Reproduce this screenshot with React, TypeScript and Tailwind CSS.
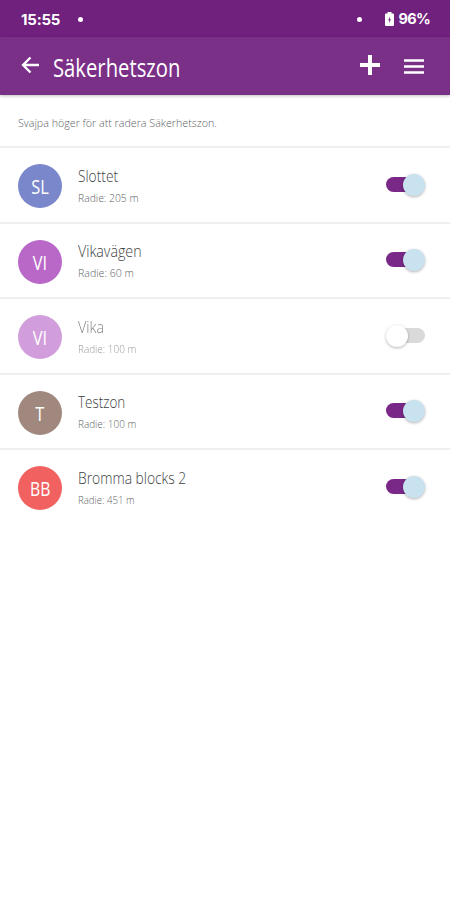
import clsx from 'clsx'

interface Zone {
  name: string
  radius: string
  initials: string
  color: string
  nameFit: string
  radiusFit: string
  initialsFit: string
  enabled: boolean
}

const zones: Zone[] = [
  { name: 'Slottet', radius: '205 m', initials: 'SL', color: 'bg-[#7b87cb]', nameFit: 'scale-x-[0.86]', radiusFit: 'scale-x-[0.9]', initialsFit: 'scale-x-[0.8]', enabled: true },
  { name: 'Vikavägen', radius: '60 m', initials: 'VI', color: 'bg-[#ba68c8]', nameFit: 'scale-x-[0.89]', radiusFit: 'scale-x-[0.92]', initialsFit: 'scale-x-[0.8]', enabled: true },
  { name: 'Vika', radius: '100 m', initials: 'VI', color: 'bg-[#ba68c8]', nameFit: 'scale-x-[0.9]', radiusFit: 'scale-x-[0.865]', initialsFit: 'scale-x-[0.8]', enabled: false },
  { name: 'Testzon', radius: '100 m', initials: 'T', color: 'bg-[#a1887f]', nameFit: 'scale-x-[0.84]', radiusFit: 'scale-x-[0.865]', initialsFit: 'scale-x-[0.8]', enabled: true },
  { name: 'Bromma blocks 2', radius: '451 m', initials: 'BB', color: 'bg-[#f0615f]', nameFit: 'scale-x-[0.865]', radiusFit: 'scale-x-[0.84]', initialsFit: 'scale-x-[0.77]', enabled: true },
]

function StatusBar() {
  return (
    <div className="flex h-[37px] items-center bg-[#70207d] pl-[21px] pr-5 pt-px text-white">
      <span className="font-['Inter',sans-serif] text-[15px] font-bold leading-none tracking-[-0.2px]">15:55</span>
      <span className="ml-[18px] size-[5px] rounded-full bg-white" />
      <span className="ml-auto mr-[23px] size-[5px] rounded-full bg-white" />
      <svg width="9" height="16" viewBox="0 0 9 16" className="mr-[5px]">
        <path d="M2.5 1h4v1.5H8a1 1 0 0 1 1 1V14a1 1 0 0 1-1 1H1a1 1 0 0 1-1-1V3.5a1 1 0 0 1 1-1h1.5z" fill="#fff" />
        <path d="M4.8 5.5 3.2 9.2h1V12l1.700-3.700H4.800z" fill="#70207d" />
      </svg>
      <span className="font-['Inter',sans-serif] text-[14.5px] font-bold leading-none tracking-[-0.7px]">96%</span>
    </div>
  )
}

function Header() {
  return (
    <header className="flex h-[58px] items-center bg-[#7b3088] pl-[21px] pr-[26px] text-white shadow-[0_1px_3px_rgba(0,0,0,0.25)]">
      <svg width="18" height="18" viewBox="0 0 18 18" fill="none" stroke="currentColor" strokeWidth="2.3" className="-mt-0.5 shrink-0">
        <path d="M9.500 1.500 2 9l7.500 7.500M2 9h16" />
      </svg>
      <h1 className="ml-[14px] mt-[3px] origin-left scale-x-[0.81] whitespace-nowrap text-[25px] font-normal leading-none">Säkerhetszon</h1>
      <div className="ml-auto flex items-center gap-6">
        <svg width="20" height="20" viewBox="0 0 20 20" stroke="currentColor" strokeWidth="4" className="-mt-0.5">
          <path d="M10 0v20M0 10h20" />
        </svg>
        <svg width="20" height="15" viewBox="0 0 20 15" stroke="currentColor" strokeWidth="2.6">
          <path d="M0 1.5h20M0 7.5h20M0 13.5h20" />
        </svg>
      </div>
    </header>
  )
}

function Toggle({ on }: { on: boolean }) {
  return (
    <div className={clsx('mb-px flex w-[39px]', on ? 'justify-start' : 'justify-end')}>
      <div className={clsx('relative h-[15px] w-[30px]', on ? 'rounded-l-full bg-[#792887]' : 'rounded-r-full bg-[#dadada]')}>
        <span
          className={clsx(
            'absolute -top-[3px] size-[22px] rounded-full shadow-[0_1px_3px_rgba(0,0,0,0.3)]',
            on ? '-right-[9px] bg-[#c9e2ef]' : '-left-[9px] bg-white'
          )}
        />
      </div>
    </div>
  )
}

function ZoneRow({ zone }: { zone: Zone }) {
  return (
    <li className="flex h-[75.5px] items-center border-t-2 border-[#efefef] pl-[18px] pr-[25px]">
      <div className={clsx('flex min-w-0 flex-1 items-center', !zone.enabled && 'opacity-65')}>
        <div className={clsx('mt-[3px] flex size-11 shrink-0 items-center justify-center rounded-full text-[20.5px] font-normal leading-none text-white', zone.color)}>
          <span className={zone.initialsFit}>{zone.initials}</span>
        </div>
        <div className="ml-4 flex flex-col items-start whitespace-nowrap pt-[3px]">
          <span className={clsx('origin-left text-[16px] leading-[22px] text-[#3d4143]', zone.nameFit)}>{zone.name}</span>
          <span className={clsx('mt-px origin-left text-[11.5px] leading-[20px] text-[#606466]', zone.radiusFit)}>Radie: {zone.radius}</span>
        </div>
      </div>
      <Toggle on={zone.enabled} />
    </li>
  )
}

export default function App() {
  return (
    <div className="flex h-[900px] w-[450px] flex-col overflow-hidden bg-white font-['Open_Sans',sans-serif] font-light">
      <StatusBar />
      <Header />
      <div className="flex h-[51px] items-center pl-[18px] pt-[5px]">
        <p className="origin-left scale-x-[0.93] whitespace-nowrap text-[11.5px] text-[#606466]">Svajpa höger för att radera Säkerhetszon.</p>
      </div>
      <ul>
        {zones.map(zone => (
          <ZoneRow key={zone.name} zone={zone} />
        ))}
      </ul>
    </div>
  )
}
